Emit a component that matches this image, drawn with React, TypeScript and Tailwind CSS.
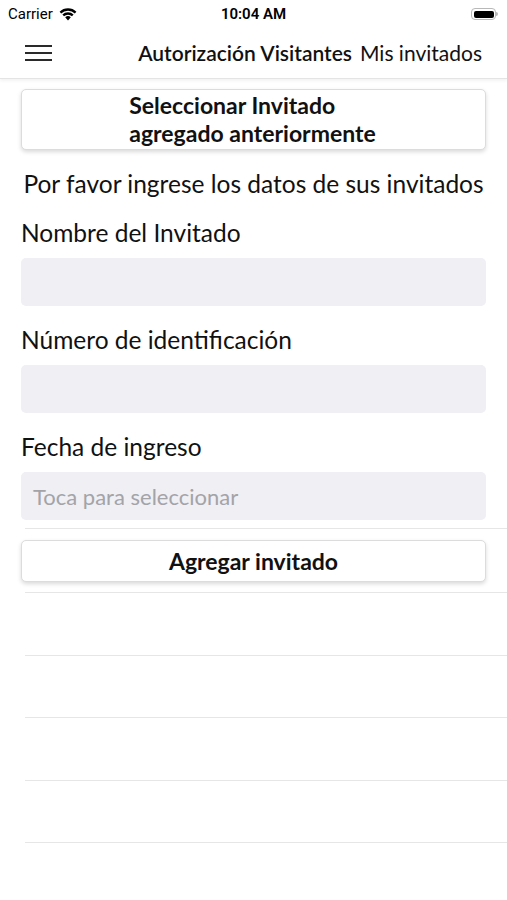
const lato = { fontFamily: 'Lato, "Open Sans", sans-serif' }

function StatusBar() {
  return (
    <div className="h-[28px] flex items-center justify-between px-[8px] relative" style={{ fontFamily: 'Roboto, "Liberation Sans", sans-serif' }}>
      <div className="flex items-center gap-[6px] text-[15px] text-black">
        <span>Carrier</span>
        <svg width="18" height="13" viewBox="0 0 18 13">
          <path d="M9 12.5 L6.2 9.3 A4 4 0 0 1 11.8 9.3 Z" fill="black" />
          <path d="M3.4 6.6 A8 8 0 0 1 14.6 6.6 L13 8.3 A5.7 5.7 0 0 0 5 8.3 Z" fill="black" />
          <path d="M0.6 3.7 A12 12 0 0 1 17.4 3.7 L15.8 5.5 A9.7 9.7 0 0 0 2.2 5.5 Z" fill="black" />
        </svg>
      </div>
      <div className="absolute left-0 right-0 text-center text-[15px] font-semibold text-black pointer-events-none">10:04 AM</div>
      <div className="flex items-center pr-[1px]">
        <div className="w-[25px] h-[12px] rounded-[4px] border border-[#b8b8b8] p-[1.5px]">
          <div className="w-full h-full rounded-[2px] bg-black" />
        </div>
        <div className="w-[2px] h-[4px] rounded-r bg-[#b8b8b8]" />
      </div>
    </div>
  )
}

function NavBar() {
  return (
    <div className="h-[51px] flex items-center pl-[25px] pr-[25px] border-b border-[#e4e4e4] shadow-[0_2px_3px_rgba(0,0,0,0.05)]" style={lato}>
      <div className="flex flex-col gap-[5px] w-[27px]">
        <div className="h-[2px] bg-[#2a2a2a]" />
        <div className="h-[2px] bg-[#2a2a2a]" />
        <div className="h-[2px] bg-[#2a2a2a]" />
      </div>
      <div className="ml-auto flex items-center gap-[8px] text-[21px] text-[#111]">
        <span className="font-semibold">Autorización Visitantes</span>
        <span>Mis invitados</span>
      </div>
    </div>
  )
}

function Field({ label, placeholder }: { label: string; placeholder?: string }) {
  return (
    <div className="mt-[21px]">
      <div className="h-[28px] leading-[26px] text-[24.5px] text-[#111]">{label}</div>
      <div className="mt-[10px] h-[48px] rounded-[5px] bg-[#efeff4] flex items-center px-[12px] text-[22px] text-[#a3a3a8]">
        {placeholder}
      </div>
    </div>
  )
}

export default function App() {
  return (
    <div className="w-[507px] h-[900px] bg-white overflow-hidden" style={lato}>
      <StatusBar />
      <NavBar />
      <div className="px-[21px] pt-[10px]">
        <button className="w-full h-[61px] rounded-[5px] bg-white border border-[#dcdcdc] shadow-[0_2px_4px_rgba(0,0,0,0.15)] flex justify-center">
          <div className="text-left text-[23px] font-bold text-[#111] leading-[28px] pt-[1px] -ml-[2px]">
            <div>Seleccionar Invitado</div>
            <div>agregado anteriormente</div>
          </div>
        </button>
        <div className="mt-[21px] h-[28px] leading-[26px] text-[24.5px] text-center text-[#111] whitespace-nowrap">
          Por favor ingrese los datos de sus invitados
        </div>
        <Field label="Nombre del Invitado" />
        <Field label="Número de identificación" />
        <Field label="Fecha de ingreso" placeholder="Toca para seleccionar" />
      </div>
      <div className="mt-[8px] ml-[25px] border-t border-[#e6e6e6]" />
      <div className="h-[63px] px-[21px] pt-[11px]">
        <button className="w-full h-[42px] rounded-[5px] bg-white border border-[#dcdcdc] shadow-[0_2px_4px_rgba(0,0,0,0.15)] text-[23px] font-bold text-[#111]">
          Agregar invitado
        </button>
      </div>
      {[0, 1, 2, 3, 4].map(i => (
        <div key={i} className="ml-[25px] h-[62.5px] border-t border-[#e6e6e6]" />
      ))}
    </div>
  )
}
